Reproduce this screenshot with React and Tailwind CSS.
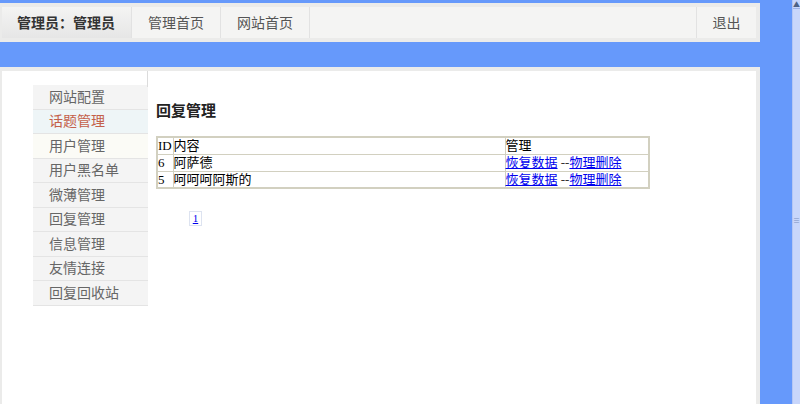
const menu = [
  { name: '网站配置' },
  { name: '话题管理', active: true },
  { name: '用户管理', hover: true },
  { name: '用户黑名单' },
  { name: '微薄管理' },
  { name: '回复管理' },
  { name: '信息管理' },
  { name: '友情连接' },
  { name: '回复回收站' },
]

const rows = [
  { id: 6, text: '阿萨德' },
  { id: 5, text: '呵呵呵阿斯的' },
]

const App = () => {
  return (
    <div className="w-[800px] h-[404px] overflow-hidden bg-[#6699fb] flex" style={{ fontFamily: '"Noto Sans CJK SC", sans-serif' }}>
      <div className="w-[792px] flex flex-col">
        {/* Top nav */}
        <div className="mt-[3px] w-[760px] h-[39px] border-y-4 border-r-4 border-l-2 border-[#ebebea] bg-[#f4f4f3] flex text-[14px] text-[#555]">
          <div className="w-[130px] flex items-center pl-[15px] font-bold text-[#333] bg-gradient-to-b from-[#f4f4f3] to-[#e6e6e6] border-r border-[#e2e2e2]">
            管理员：管理员
          </div>
          <div className="w-[89px] flex items-center justify-center border-r border-[#e2e2e2]">管理首页</div>
          <div className="w-[89px] flex items-center justify-center border-r border-[#e2e2e2]">网站首页</div>
          <div className="flex-1" />
          <div className="w-[60px] flex items-center justify-center border-l border-[#e2e2e2]">退出</div>
        </div>

        {/* Main panel */}
        <div className="mt-[25px] w-[760px] flex-1 border-t-4 border-r-4 border-l-2 border-[#ebebea] bg-white flex">
          <div className="w-[146px] shrink-0 relative">
            <div className="absolute right-0 top-0 h-[16px] border-r border-[#dcdcdc]" />
            <div className="ml-[31px] mt-[14px] w-[115px]">
              {menu.map((m) => (
                <div
                  key={m.name}
                  className={`h-[24.5px] border-b border-[#e4e4e4] pl-[16px] flex items-center text-[14px] leading-[18px] pb-[2px] ${
                    m.active ? 'bg-[#eef5f7] text-[#c4604a]' : m.hover ? 'bg-[#fbfbf6] text-[#666]' : 'bg-[#f4f4f4] text-[#666]'
                  }`}
                >
                  {m.name}
                </div>
              ))}
            </div>
          </div>

          <div className="pl-[8px] pt-[29px]">
            <h2 className="text-[15px] font-bold text-[#222] leading-[20px]">回复管理</h2>
            <table
              className="mt-[16px] border-collapse border-2 border-[#d2d0c0] text-[13px] text-black leading-[15px]"
              style={{ fontFamily: '"Liberation Serif", "Noto Sans CJK SC", serif' }}
            >
              <tbody>
                <tr className="h-[17px]">
                  <td className="w-[16px] border border-[#d2d0c0] px-0">ID</td>
                  <td className="w-[332px] border border-[#d2d0c0] px-0">内容</td>
                  <td className="w-[144px] border border-[#d2d0c0] px-0">管理</td>
                </tr>
                {rows.map((r) => (
                  <tr key={r.id} className="h-[17px]">
                    <td className="border border-[#d2d0c0] px-0">{r.id}</td>
                    <td className="border border-[#d2d0c0] px-0">{r.text}</td>
                    <td className="border border-[#d2d0c0] px-0">
                      <a href="#" className="text-[#0000ee] underline">恢复数据</a>
                      <span className="text-[#333]"> --</span>
                      <a href="#" className="text-[#0000ee] underline">物理删除</a>
                    </td>
                  </tr>
                ))}
              </tbody>
            </table>
            <div className="mt-[22px] ml-[33px] w-[13px] h-[15px] border border-[#dde3f0] flex items-center justify-center" style={{ fontFamily: '"Liberation Serif", serif' }}>
              <a href="#" className="text-[11px] text-[#0000ee] underline leading-none">1</a>
            </div>
          </div>
        </div>
      </div>

      {/* scrollbar */}
      <div className="w-[8px] h-full bg-[#c8d6fb] border-l border-[#b4c6f4] flex flex-col items-center">
        <div className="h-[9px] w-full border-b border-[#9fb3e8] text-[7px] leading-[9px] text-[#4d6185] text-center">▲</div>
        <div className="mt-[208px] text-[7px] leading-none text-[#7a8fc0]">≡</div>
      </div>
    </div>
  )
}

export default App
